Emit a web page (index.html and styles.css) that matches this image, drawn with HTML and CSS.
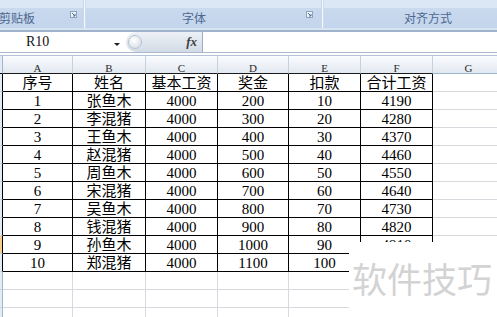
FILE: index.html
```html
<!DOCTYPE html>
<html lang="zh-CN">
<head>
<meta charset="utf-8">
<title>Excel</title>
<link rel="stylesheet" href="styles.css">
</head>
<body>
<div class="app">
  <div class="ribbon">
    <div class="groups">
      <div class="grp g1">
        <div class="gtop"></div>
        <div class="gband"><span class="glabel l1">剪贴板</span><span class="launch"><svg width="7" height="7" viewBox="0 0 7 7"><rect x="0.5" y="0.5" width="6" height="6" fill="#eef3f9" stroke="#8ea3bd"/><path d="M2 2 L5 5 M5 3 V5 H3" stroke="#5b6f88" fill="none"/></svg></span></div>
      </div>
      <div class="sep"></div>
      <div class="grp g2">
        <div class="gtop"></div>
        <div class="gband"><span class="glabel l2">字体</span><span class="launch"><svg width="7" height="7" viewBox="0 0 7 7"><rect x="0.5" y="0.5" width="6" height="6" fill="#eef3f9" stroke="#8ea3bd"/><path d="M2 2 L5 5 M5 3 V5 H3" stroke="#5b6f88" fill="none"/></svg></span></div>
      </div>
      <div class="sep"></div>
      <div class="grp g3">
        <div class="gtop"></div>
        <div class="gband"><span class="glabel l3">对齐方式</span></div>
      </div>
    </div>
    <div class="rb-hl"></div>
    <div class="rb-line"></div>
  </div>

  <div class="fbar">
    <div class="namebox"><span class="nm">R10</span><span class="dd"></span></div>
    <div class="fxcap"><span class="knob"></span><span class="fx">fx</span></div>
    <div class="finput"></div>
  </div>

  <div class="sheet">
    <div class="row">
      <div class="rh corner"></div>
      <div class="h hk">A</div><div class="h hk">B</div><div class="h hk">C</div><div class="h hk">D</div><div class="h hk">E</div><div class="h hk">F</div><div class="h">G</div>
    </div>
    <div class="row">
      <div class="rh k"></div>
      <div class="c k">序号</div><div class="c k">姓名</div><div class="c k">基本工资</div><div class="c k">奖金</div><div class="c k">扣款</div><div class="c k">合计工资</div><div class="c"></div>
    </div>
    <div class="row">
      <div class="rh k"></div>
      <div class="c k">1</div><div class="c k">张鱼木</div><div class="c k">4000</div><div class="c k">200</div><div class="c k">10</div><div class="c k">4190</div><div class="c"></div>
    </div>
    <div class="row">
      <div class="rh k"></div>
      <div class="c k">2</div><div class="c k">李混猪</div><div class="c k">4000</div><div class="c k">300</div><div class="c k">20</div><div class="c k">4280</div><div class="c"></div>
    </div>
    <div class="row">
      <div class="rh k"></div>
      <div class="c k">3</div><div class="c k">王鱼木</div><div class="c k">4000</div><div class="c k">400</div><div class="c k">30</div><div class="c k">4370</div><div class="c"></div>
    </div>
    <div class="row">
      <div class="rh k"></div>
      <div class="c k">4</div><div class="c k">赵混猪</div><div class="c k">4000</div><div class="c k">500</div><div class="c k">40</div><div class="c k">4460</div><div class="c"></div>
    </div>
    <div class="row">
      <div class="rh k"></div>
      <div class="c k">5</div><div class="c k">周鱼木</div><div class="c k">4000</div><div class="c k">600</div><div class="c k">50</div><div class="c k">4550</div><div class="c"></div>
    </div>
    <div class="row">
      <div class="rh k"></div>
      <div class="c k">6</div><div class="c k">宋混猪</div><div class="c k">4000</div><div class="c k">700</div><div class="c k">60</div><div class="c k">4640</div><div class="c"></div>
    </div>
    <div class="row">
      <div class="rh k"></div>
      <div class="c k">7</div><div class="c k">吴鱼木</div><div class="c k">4000</div><div class="c k">800</div><div class="c k">70</div><div class="c k">4730</div><div class="c"></div>
    </div>
    <div class="row">
      <div class="rh k"></div>
      <div class="c k">8</div><div class="c k">钱混猪</div><div class="c k">4000</div><div class="c k">900</div><div class="c k">80</div><div class="c k">4820</div><div class="c"></div>
    </div>
    <div class="row">
      <div class="rh k sel"></div>
      <div class="c k">9</div><div class="c k">孙鱼木</div><div class="c k">4000</div><div class="c k">1000</div><div class="c k">90</div><div class="c k">4910</div><div class="c"></div>
    </div>
    <div class="row">
      <div class="rh k"></div>
      <div class="c k">10</div><div class="c k">郑混猪</div><div class="c k">4000</div><div class="c k">1100</div><div class="c k">100</div><div class="c k">5000</div><div class="c"></div>
    </div>
    <div class="row">
      <div class="rh"></div>
      <div class="c"></div><div class="c"></div><div class="c"></div><div class="c"></div><div class="c"></div><div class="c"></div><div class="c"></div>
    </div>
    <div class="row">
      <div class="rh"></div>
      <div class="c"></div><div class="c"></div><div class="c"></div><div class="c"></div><div class="c"></div><div class="c"></div><div class="c"></div>
    </div>
    <div class="row">
      <div class="rh"></div>
      <div class="c"></div><div class="c"></div><div class="c"></div><div class="c"></div><div class="c"></div><div class="c"></div><div class="c"></div>
    </div>
  </div>

  <div class="wm">软件技巧</div>
</div>
</body>
</html>
```

FILE: styles.css
```css
html, body {
  margin: 0;
  padding: 0;
  background: #ffffff;
}
.app {
  position: relative;
  width: 497px;
  height: 317px;
  overflow: hidden;
  font-family: "Liberation Serif", "Noto Sans CJK SC", serif;
}

/* ribbon */
.ribbon {
  height: 32px;
}
.groups {
  display: flex;
  height: 28px;
}
.grp {
  display: flex;
  flex-direction: column;
}
.g1 { width: 83px; }
.g2 { width: 235px; }
.g3 { flex: 1; }
.gtop {
  height: 8px;
  background: #dce7f5;
}
.gband {
  height: 20px;
  display: flex;
  align-items: flex-start;
  background: linear-gradient(#c9d9ee, #c3d5ec);
}
.glabel {
  font-family: "Noto Sans CJK SC", sans-serif;
  font-size: 12px;
  line-height: 20px;
  color: #4d6790;
  white-space: nowrap;
}
.l1 { margin-left: -1px; }
.l2 { margin-left: 96px; }
.l3 { margin-left: 80px; }
.launch {
  display: flex;
  margin-left: auto;
  margin-top: 3px;
  margin-right: 6px;
}
.g2 .launch { margin-right: 8px; }
.sep {
  width: 3px;
  background: linear-gradient(to right, #b3c6de, #f4f8fc, #bccde2);
}
.rb-hl {
  height: 2px;
  background: #d9e4f2;
}
.rb-line {
  height: 2px;
  background: #9fb3cc;
}

/* formula bar */
.fbar {
  display: flex;
  height: 20px;
  border-bottom: 1px solid #a9b8ca;
  background: #ffffff;
}
.namebox {
  width: 126px;
  display: flex;
  align-items: center;
}
.nm {
  margin-left: 26px;
  font-size: 14px;
  line-height: 20px;
  color: #111;
}
.dd {
  margin-left: auto;
  margin-right: 6px;
  margin-top: 4px;
  width: 0;
  height: 0;
  border-left: 3px solid transparent;
  border-right: 3px solid transparent;
  border-top: 3px solid #1e1e1e;
}
.fxcap {
  width: 77px;
  display: flex;
  align-items: center;
  border-radius: 11px 0 0 11px;
  background: linear-gradient(#edf1f6, #d2dbe6);
  border-right: 1px solid #9cadc1;
  box-sizing: border-box;
}
.knob {
  width: 14px;
  height: 14px;
  margin-left: 2px;
  border-radius: 50%;
  box-sizing: border-box;
  border: 1px solid #b7c3d1;
  background: radial-gradient(circle at 40% 35%, #ffffff, #dde4ec 70%, #c7d1dd);
}
.fx {
  margin-left: auto;
  margin-right: 5px;
  font-style: italic;
  font-weight: bold;
  font-size: 13px;
  line-height: 20px;
  color: #3f3f3f;
}
.finput {
  flex: 1;
}

/* sheet */
.sheet {
  margin-top: 2px;
  border-top: 1px solid #b4c4d7;
  overflow: hidden;
}
.row {
  display: grid;
  grid-template-columns: 3px 70px 73px 72px 71px 72px 72px 72px;
  height: 18px;
  width: 505px;
}
.rh {
  box-sizing: border-box;
  background: #e3ebf6;
  border-right: 1px solid #9eb6ce;
  border-bottom: 1px solid #c5d3e3;
}
.rh.k { border-right-color: #000; }
.rh.sel { background: #f6cf8d; }
.rh.corner { border-bottom-color: #000; }
.h {
  box-sizing: border-box;
  display: flex;
  align-items: flex-end;
  justify-content: center;
  background: linear-gradient(#fafcfe, #e2e8f1);
  border-right: 1px solid #c5d1e0;
  border-bottom: 1px solid #9eb6ce;
  font-size: 11px;
  line-height: 9px;
  color: #2a2a2a;
}
.h.hk { border-bottom-color: #1a1a1a; }
.c {
  box-sizing: border-box;
  height: 18px;
  padding-top: 1px;
  border-right: 1px solid #d6d9de;
  border-bottom: 1px solid #d6d9de;
  font-size: 15px;
  line-height: 17px;
  text-align: center;
  white-space: nowrap;
  overflow: hidden;
  color: #000;
}
.c.k {
  border-right-color: #000;
  border-bottom-color: #000;
}

/* watermark */
.wm {
  position: absolute;
  left: 349px;
  top: 242px;
  width: 148px;
  height: 75px;
  box-sizing: border-box;
  padding-top: 18px;
  padding-left: 3px;
  background: #ffffff;
  font-family: "Noto Sans CJK SC", sans-serif;
  font-size: 35px;
  line-height: 35px;
  color: #d3d3d3;
  white-space: nowrap;
}
```
